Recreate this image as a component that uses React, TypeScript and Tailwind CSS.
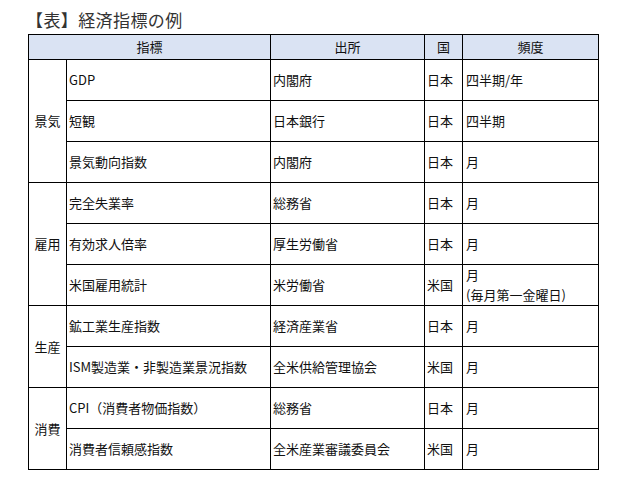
const FONT = '"Noto Sans CJK JP", "Noto Sans", sans-serif'

interface Row {
  name: string
  source: string
  country: string
  freq: string[]
}

interface Group {
  label: string
  rows: Row[]
}

const groups: Group[] = [
  {
    label: '景気',
    rows: [
      { name: 'GDP', source: '内閣府', country: '日本', freq: ['四半期/年'] },
      { name: '短観', source: '日本銀行', country: '日本', freq: ['四半期'] },
      { name: '景気動向指数', source: '内閣府', country: '日本', freq: ['月'] },
    ],
  },
  {
    label: '雇用',
    rows: [
      { name: '完全失業率', source: '総務省', country: '日本', freq: ['月'] },
      { name: '有効求人倍率', source: '厚生労働省', country: '日本', freq: ['月'] },
      { name: '米国雇用統計', source: '米労働省', country: '米国', freq: ['月', '(毎月第一金曜日)'] },
    ],
  },
  {
    label: '生産',
    rows: [
      { name: '鉱工業生産指数', source: '経済産業省', country: '日本', freq: ['月'] },
      { name: 'ISM製造業・非製造業景況指数', source: '全米供給管理協会', country: '米国', freq: ['月'] },
    ],
  },
  {
    label: '消費',
    rows: [
      { name: 'CPI（消費者物価指数）', source: '総務省', country: '日本', freq: ['月'] },
      { name: '消費者信頼感指数', source: '全米産業審議委員会', country: '米国', freq: ['月'] },
    ],
  },
]

export default function App() {
  const cell = 'border border-black h-[41px] align-middle pl-[2px] pr-[2px] py-0 leading-[20px]'

  return (
    <div className="w-[626px] h-[480px] bg-white" style={{ fontFamily: FONT }}>
      <div className="pl-[26px] pt-[7px] text-[17px] leading-[25px] tracking-[0.4px] text-[#333333]">【表】経済指標の例</div>

      <table className="ml-[28px] mt-[2px] border-collapse table-fixed w-[570px] text-[13px] text-[#111111]">
        <colgroup>
          <col className="w-[38px]" />
          <col className="w-[204px]" />
          <col className="w-[154px]" />
          <col className="w-[38px]" />
          <col className="w-[136px]" />
        </colgroup>
        <thead>
          <tr className="bg-[#dae3f3]">
            <th colSpan={2} className="border border-black h-[25px] font-normal text-center p-0">指標</th>
            <th className="border border-black font-normal text-center p-0">出所</th>
            <th className="border border-black font-normal text-center p-0">国</th>
            <th className="border border-black font-normal text-center p-0">頻度</th>
          </tr>
        </thead>
        <tbody>
          {groups.map((g) =>
            g.rows.map((r, i) => (
              <tr key={g.label + r.name}>
                {i === 0 && (
                  <td rowSpan={g.rows.length} className="border border-black align-middle text-center p-0">
                    {g.label}
                  </td>
                )}
                <td className={cell}>{r.name}</td>
                <td className={cell}>{r.source}</td>
                <td className={cell}>{r.country}</td>
                <td className={cell + ' pl-[3px]'}>
                  {r.freq.map((f) => (
                    <div key={f}>{f}</div>
                  ))}
                </td>
              </tr>
            ))
          )}
        </tbody>
      </table>
    </div>
  )
}
